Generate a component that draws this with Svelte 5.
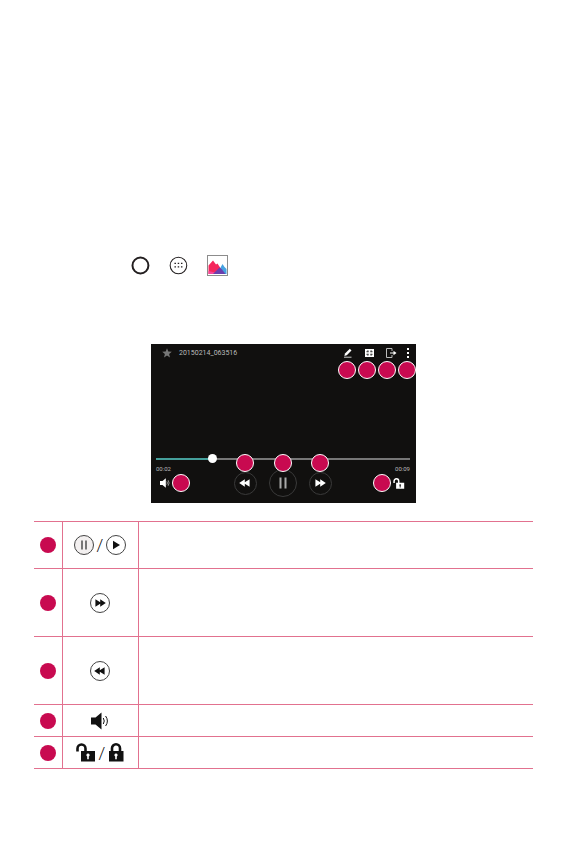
<!--
	Video player guide page: the way into the gallery, the player itself with
	its callout dots, and the table of controls.
-->
<script lang="ts">
	type Glyph = 'pause' | 'play' | 'forward' | 'rewind' | 'volume' | 'unlocked' | 'locked';

	const duration = 9;
	let position = $state(1.9);

	const rows: { glyphs: Glyph[]; size: 'short' | 'medium' | 'tall' }[] = [
		{ glyphs: ['pause', 'play'], size: 'medium' },
		{ glyphs: ['forward'], size: 'tall' },
		{ glyphs: ['rewind'], size: 'tall' },
		{ glyphs: ['volume'], size: 'short' },
		{ glyphs: ['unlocked', 'locked'], size: 'short' }
	];

	const progress = $derived((position / duration) * 100);

	function clock(seconds: number) {
		return `00:${String(Math.round(seconds)).padStart(2, '0')}`;
	}
</script>

{#snippet seek(flip: boolean)}
	<svg class="seek" class:flip viewBox="0 0 20 20" aria-hidden="true">
		<path d="M5.4 6.2 L10.2 9.2 V6.2 L15.8 10 L10.2 13.8 V10.8 L5.4 13.8 Z" fill="currentColor" />
	</svg>
{/snippet}

{#snippet volume()}
	<svg class="volume" viewBox="0 0 18 18" aria-hidden="true">
		<path d="M0 5.5 H4.5 L10.5 0.5 V17.5 L4.5 12.5 H0 Z" fill="currentColor" />
		<path d="M12.3 6 Q14.2 9 12.3 12 M14.6 4 Q18.2 9 14.6 14" fill="none" stroke="currentColor" />
	</svg>
{/snippet}

{#snippet unlocked()}
	<svg class="unlocked" viewBox="0 0 20 19" aria-hidden="true">
		<path d="M1.5 8.5 V5.5 A4 4 0 0 1 9.5 5.5 V9" fill="none" stroke="currentColor" stroke-width="2.6" />
		<path fill-rule="evenodd" d="M5 8 H19 V18.5 H5 Z M12 10.6 A1.6 1.6 0 0 0 11.2 13.6 V16.2 H12.8 V13.6 A1.6 1.6 0 0 0 12 10.6 Z" fill="currentColor" />
	</svg>
{/snippet}

{#snippet glyph(name: Glyph)}
	{#if name === 'volume'}
		{@render volume()}
	{:else if name === 'unlocked'}
		{@render unlocked()}
	{:else if name === 'locked'}
		<svg class="locked" viewBox="0 0 16 19" aria-hidden="true">
			<path d="M4 9 V5.3 A4 4 0 0 1 12 5.3 V9" fill="none" stroke="currentColor" stroke-width="2.6" />
			<path fill-rule="evenodd" d="M1 8 H15.5 V18.5 H1 Z M8 10.6 A1.6 1.6 0 0 0 7.2 13.6 V16.2 H8.8 V13.6 A1.6 1.6 0 0 0 8 10.6 Z" fill="currentColor" />
		</svg>
	{:else}
		<span class="disc {name}">
			{#if name === 'forward' || name === 'rewind'}
				{@render seek(name === 'rewind')}
			{:else}
				<svg viewBox="0 0 20 20" aria-hidden="true">
					{#if name === 'pause'}
						<path d="M8 5.5 V14.5 M12 5.5 V14.5" stroke="currentColor" stroke-width="2" />
					{:else}
						<path d="M7 5.8 L14 10 L7 14.2 Z" fill="currentColor" />
					{/if}
				</svg>
			{/if}
		</span>
	{/if}
{/snippet}

<main>
	<div class="path">
		<svg viewBox="0 0 20 20" aria-hidden="true">
			<circle cx="9" cy="10" r="7.6" fill="none" stroke="#231f20" stroke-width="1.9" />
		</svg>
		<svg viewBox="0 0 20 20" aria-hidden="true">
			<circle cx="9" cy="10" r="7.9" fill="none" stroke="#231f20" stroke-width="1" />
			<path d="M5.2 8 H6.6 M8.3 8 H9.7 M11.4 8 H12.8 M5.2 11.3 H6.6 M8.3 11.3 H9.7 M11.4 11.3 H12.8" stroke="#231f20" stroke-width="1.3" />
		</svg>
		<svg viewBox="0 0 21 21" aria-hidden="true">
			<rect x="0.5" y="0.5" width="20" height="20" fill="#fff" stroke="#8c8c8c" />
			<path d="M10 19 L15.5 9 L17.5 12 L19.5 14 V19 Z" fill="#45a3e2" />
			<path d="M1.5 19 V10.5 L6 5.5 L9 9.5 L10.5 8.5 L14 14 L15 19 Z" fill="#f5265c" />
			<path d="M1.5 19 V16 L8 17.5 L7 19 Z" fill="#f5469a" />
			<path d="M6 19 L12.5 12.5 L15 14.5 L18.5 19 Z" fill="#6a3fae" />
		</svg>
	</div>

	<section class="player" aria-label="Video player">
		<header>
			<svg class="star" viewBox="0 0 10 10" aria-hidden="true">
				<path d="M5 0.3 L6.3 3.6 L9.8 3.8 L7.1 6 L8 9.5 L5 7.6 L2 9.5 L2.9 6 L0.2 3.8 L3.7 3.6 Z" fill="#777" />
			</svg>
			<span class="name">20150214_063516</span>
			<button type="button" aria-label="Edit">
				<svg viewBox="0 0 14 14" aria-hidden="true">
					<path d="M3.4 10 L4 7.6 L8.8 2.8 L10.5 4.4 L5.8 9.2 Z" fill="#fff" />
					<path d="M3 11.2 H10.5" stroke="#ccc" />
				</svg>
			</button>
			<button type="button" aria-label="Pop-up play">
				<svg viewBox="0 0 14 14" aria-hidden="true">
					<rect x="3" y="3" width="9" height="8" fill="#fff" />
					<path d="M4.4 5.7 H6.6 M8.4 5.7 H10.6 M4.4 8.3 H6.6 M8.4 8.3 H10.6 M5.9 4.2 V6.2 M9.1 4.2 V6.2 M5.9 7.8 V9.8 M9.1 7.8 V9.8" stroke="#333" stroke-width="0.9" />
				</svg>
			</button>
			<button type="button" aria-label="Share to device">
				<svg viewBox="0 0 14 14" aria-hidden="true">
					<path d="M9 5 V2.5 H3.5 V11.5 H9 V9" fill="none" stroke="#bbb" />
					<path d="M7 7 H11" stroke="#fff" />
					<path d="M10.5 4.8 L13.5 7 L10.5 9.2 Z" fill="#fff" />
				</svg>
			</button>
			<button type="button" class="more" aria-label="More options">
				<svg viewBox="0 0 8 14" aria-hidden="true">
					<path d="M3 3 H5 M3 7 H5 M3 11 H5" stroke="#fff" stroke-width="2" />
				</svg>
			</button>
		</header>

		<div class="stage">
			{#each { length: 4 }}
				<span class="callout"></span>
			{/each}
		</div>

		<input
			type="range"
			aria-label="Position"
			min="0"
			max={duration}
			step="0.1"
			bind:value={position}
			style:--progress="{progress}%"
		/>
		<div class="times">
			<span>{clock(position)}</span>
			<span>{clock(duration)}</span>
		</div>

		<div class="controls">
			<div class="side">
				<button type="button" aria-label="Volume">{@render volume()}</button>
				<span class="callout"></span>
			</div>
			<div class="transport">
				<div class="slot">
					<button type="button" class="round" aria-label="Rewind">{@render seek(true)}</button>
					<span class="callout over"></span>
				</div>
				<div class="slot">
					<button type="button" class="round large" aria-label="Pause">
						<svg viewBox="0 0 20 20" aria-hidden="true">
							<path d="M7.5 4.5 V15.5 M12.5 4.5 V15.5" stroke="#aaa" stroke-width="2" />
						</svg>
					</button>
					<span class="callout over"></span>
				</div>
				<div class="slot">
					<button type="button" class="round" aria-label="Fast-forward">{@render seek(false)}</button>
					<span class="callout over"></span>
				</div>
			</div>
			<div class="side end">
				<span class="callout"></span>
				<button type="button" aria-label="Lock screen">{@render unlocked()}</button>
			</div>
		</div>
	</section>

	<table>
		<tbody>
			{#each rows as row}
				<tr class={row.size}>
					<td class="mark"><span class="dot"></span></td>
					<td class="icons">
						<div class="glyphs">
							{#each row.glyphs as name, i}
								{#if i > 0}<span class="slash">/</span>{/if}
								{@render glyph(name)}
							{/each}
						</div>
					</td>
					<td></td>
				</tr>
			{/each}
		</tbody>
	</table>
</main>

<style>
	:global(body) {
		margin: 0;
		background: #fff;
	}

	main {
		--crimson: #c80a50;
		--rule: #e2718f;
		padding: 255px 34px 81px;
		font-family: Roboto, "Liberation Sans", sans-serif;
		color: #111;
	}

	svg {
		display: block;
		flex-shrink: 0;
	}

	button {
		display: flex;
		align-items: center;
		justify-content: center;
		padding: 0;
		border: none;
		background: none;
		color: #fff;
		cursor: pointer;
	}

	.path {
		display: flex;
		align-items: center;
		gap: 17px;
		padding-left: 97px;
	}

	.path svg {
		width: 21px;
		height: 21px;
	}

	/* player */
	.player {
		max-width: 265px;
		margin: 68px auto 18px;
		padding-bottom: 6px;
		box-sizing: border-box;
		background: #11100f;
		color: #bbb;
	}

	header {
		display: flex;
		align-items: center;
		gap: 7px;
		height: 17px;
		padding: 0 4px 0 11px;
	}

	.star {
		width: 10px;
		height: 10px;
	}

	.name {
		flex: 1;
		font-size: 7px;
		line-height: 10px;
	}

	header button,
	header button svg {
		width: 14px;
		height: 14px;
	}

	header .more,
	header .more svg {
		width: 8px;
	}

	.stage {
		display: flex;
		justify-content: flex-end;
		gap: 2px;
		height: 92px;
	}

	.callout {
		width: 18px;
		height: 18px;
		box-sizing: border-box;
		border: 1px solid #fff;
		border-radius: 50%;
		background: var(--crimson);
		flex-shrink: 0;
	}

	input[type='range'] {
		display: block;
		appearance: none;
		width: calc(100% - 11px);
		height: 12px;
		margin: 0 6px 0 5px;
		background: none;
	}

	input[type='range']::-webkit-slider-runnable-track {
		height: 2px;
		background: linear-gradient(to right, #45a09b var(--progress), #777 var(--progress));
	}

	input[type='range']::-webkit-slider-thumb {
		appearance: none;
		width: 9px;
		height: 9px;
		margin-top: -4px;
		border-radius: 50%;
		background: #fff;
	}

	.times {
		display: flex;
		justify-content: space-between;
		padding: 0 6px 0 5px;
		font-size: 6px;
		line-height: 8px;
	}

	.controls {
		display: grid;
		grid-template-columns: 1fr auto 1fr;
		align-items: center;
		margin-top: -4px;
		padding: 0 11px 0 9px;
	}

	.side {
		display: flex;
		align-items: center;
		gap: 2px;
	}

	.side.end {
		justify-content: flex-end;
	}

	.side .volume {
		width: 10px;
		height: 10px;
	}

	.side .unlocked {
		width: 12px;
		height: 11px;
	}

	.transport {
		display: flex;
		align-items: center;
		gap: 12px;
	}

	.slot {
		position: relative;
	}

	.round {
		width: 23px;
		height: 23px;
		border: 1px solid #3a3a3a;
		border-radius: 50%;
	}

	.round.large {
		width: 28px;
		height: 28px;
	}

	.round svg {
		width: 20px;
		height: 20px;
	}

	/* sits on the button's upper rim, across the seek bar */
	.callout.over {
		position: absolute;
		bottom: calc(50% + 11px);
		left: calc(50% - 9px);
	}

	.flip {
		transform: scaleX(-1);
	}

	/* table of controls */
	table {
		width: 100%;
		border-spacing: 0;
		border-top: 1px solid var(--rule);
		table-layout: fixed;
	}

	td {
		box-sizing: border-box;
		padding: 0;
		border-bottom: 1px solid var(--rule);
	}

	.mark,
	.icons {
		border-right: 1px solid var(--rule);
	}

	.mark {
		width: 29px;
	}

	.icons {
		width: 76px;
	}

	.short td {
		height: 32px;
	}

	.medium td {
		height: 47px;
	}

	.tall td {
		height: 68px;
	}

	.dot {
		display: block;
		width: 16px;
		height: 16px;
		margin: 0 auto;
		border-radius: 50%;
		background: var(--crimson);
	}

	.glyphs {
		display: flex;
		align-items: center;
		justify-content: center;
		gap: 3px;
		padding-right: 1px;
	}

	.slash {
		font-size: 17px;
		font-weight: 300;
		line-height: 20px;
	}

	.disc {
		width: 20px;
		height: 20px;
		box-sizing: border-box;
		display: flex;
		align-items: center;
		justify-content: center;
		border: 1px solid #444;
		border-radius: 50%;
	}

	.disc svg {
		width: 20px;
		height: 20px;
	}

	.disc.pause {
		background: #f3f0f0;
		color: #777;
	}

	.glyphs .volume {
		width: 18px;
		height: 18px;
	}

	.glyphs .unlocked {
		width: 20px;
		height: 19px;
	}

	.glyphs .locked {
		width: 16px;
		height: 19px;
	}
</style>
